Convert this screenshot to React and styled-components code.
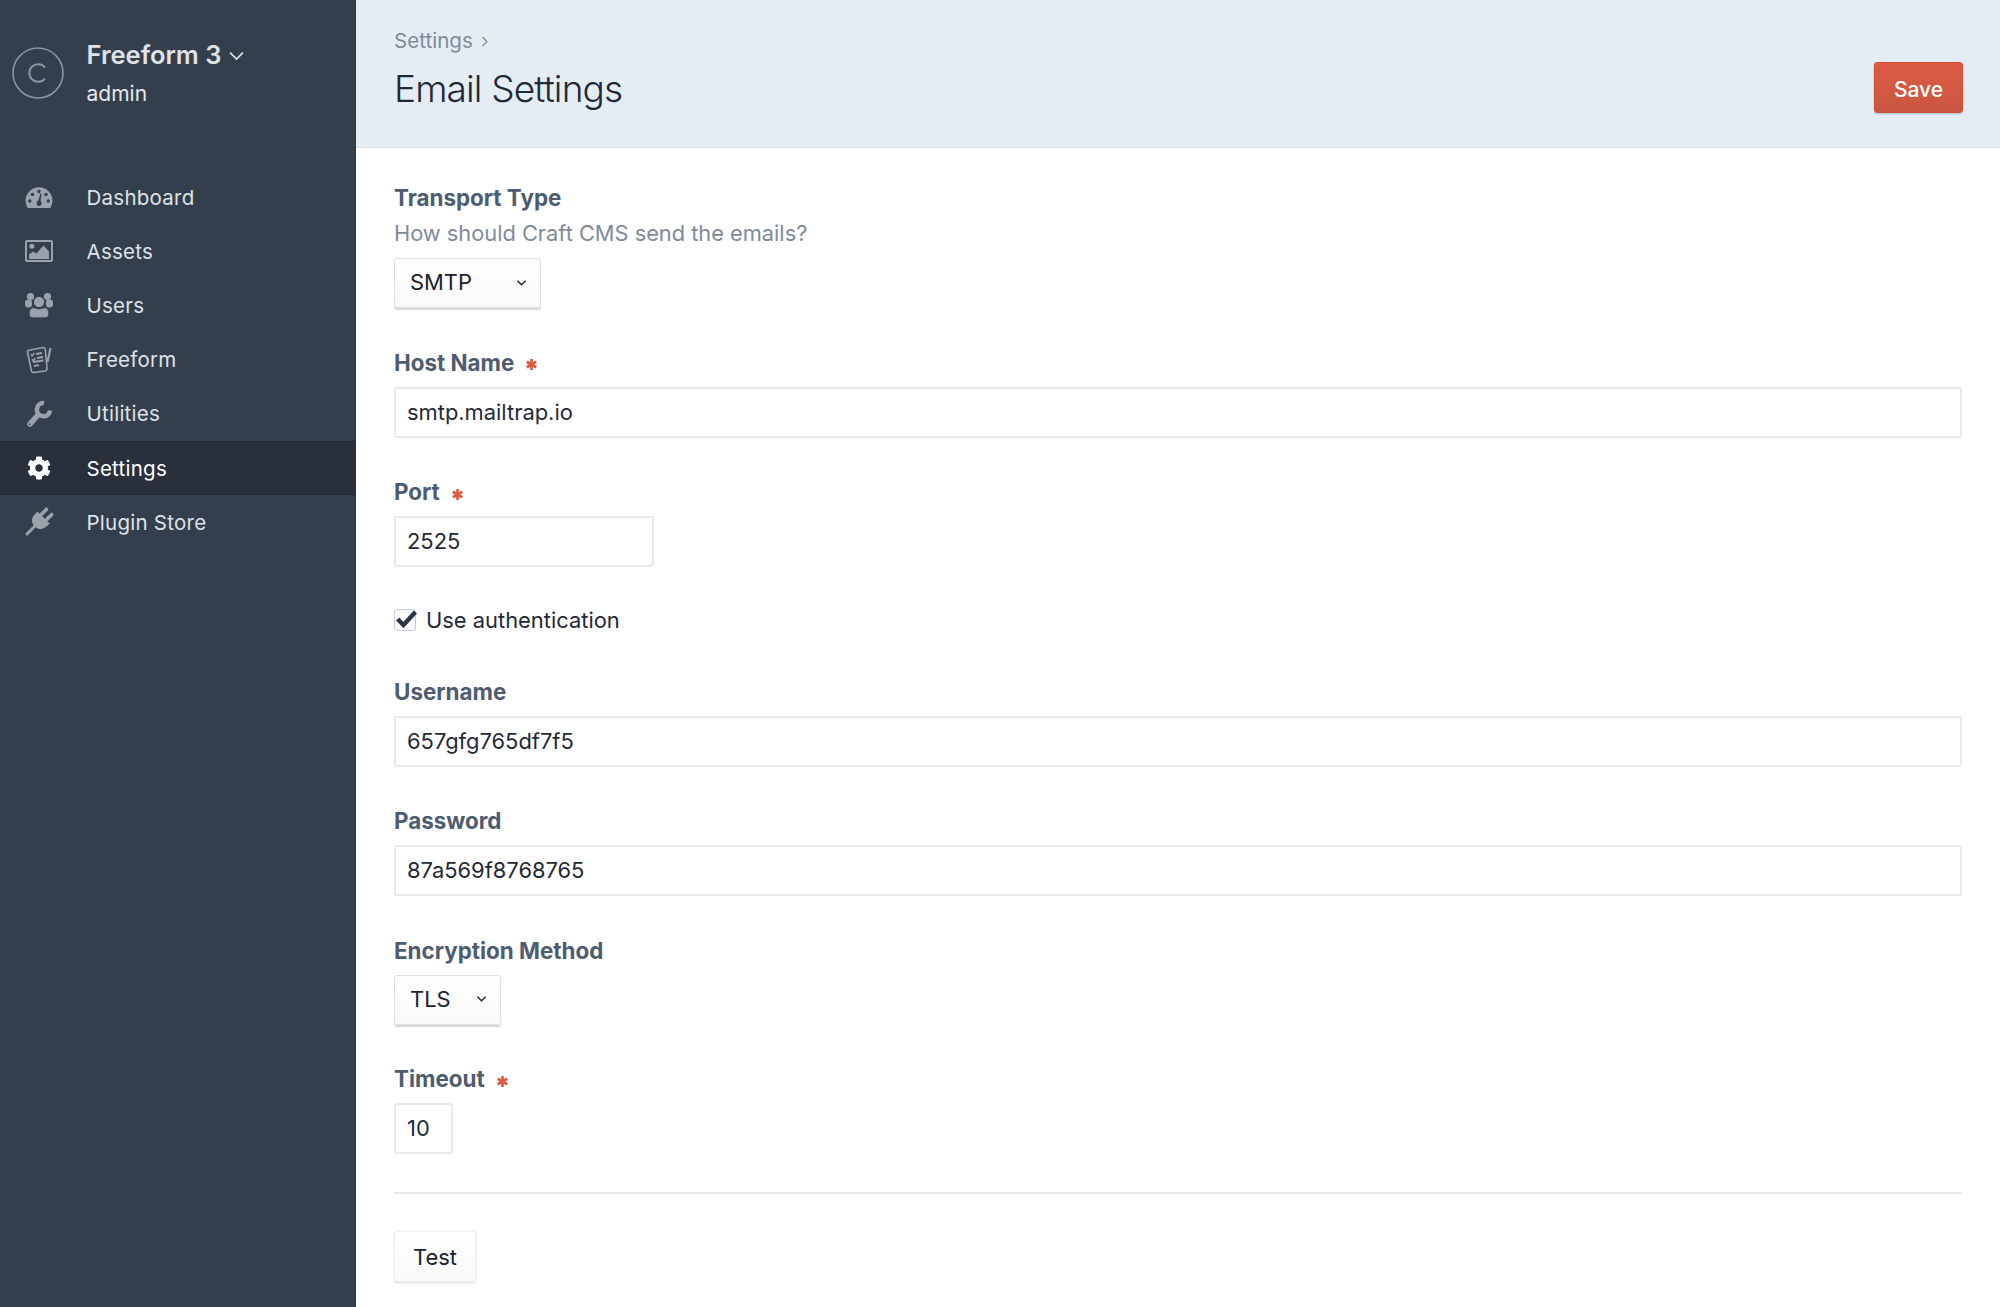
import React from "react";
import styled, { createGlobalStyle } from "styled-components";
import { FaCog } from "react-icons/fa";

const Global = createGlobalStyle`
  html, body { margin: 0; padding: 0; background: #fff; }
  body { font-family: Inter, "Liberation Sans", sans-serif; color: #1f2937; }
  * { box-sizing: border-box; }
`;

const Page = styled.div`
  display: flex;
  width: 2000px;
  height: 1307px;
  overflow: hidden;
`;

const Sidebar = styled.aside`
  width: 356px;
  flex: none;
  background: #343f4d;
  border-right: 1px solid #2b3440;
  color: #e2e5e9;
`;

const Brand = styled.div`
  display: flex;
  align-items: flex-start;
  padding: 37px 0 0 12px;
  height: 170px;
`;

const BrandLogo = styled.svg`
  width: 52px;
  height: 52px;
  flex: none;
  margin-top: 10px;
`;

const BrandText = styled.div`
  display: flex;
  flex-direction: column;
  margin-left: 22.5px;
`;

const BrandName = styled.div`
  display: flex;
  align-items: center;
  gap: 7px;
  font-size: 25.5px;
  line-height: 36px;
  font-weight: 600;
  color: #dfe2e6;
`;

const BrandUser = styled.div`
  font-size: 21px;
  line-height: 30px;
  margin-top: 5.5px;
  color: #e6e8eb;
`;

const Nav = styled.nav`
  display: flex;
  flex-direction: column;
`;

const NavRow = styled.div`
  display: flex;
  align-items: center;
  height: 54.2px;
  padding-left: 25px;
  font-size: 20.5px;
  letter-spacing: 0.25px;
  color: ${(p) => (p.$active ? "#ffffff" : "#dfe2e6")};
  background: ${(p) => (p.$active ? "#29303b" : "transparent")};
  box-shadow: ${(p) => (p.$active ? "inset 0 1px 0 #222831, inset 0 -1px 0 #222831" : "none")};
`;

const NavIcon = styled.span`
  width: 28px;
  height: 28px;
  margin-right: 33.5px;
  display: flex;
  align-items: center;
  justify-content: center;
  flex: none;
  color: ${(p) => (p.$active ? "#ffffff" : "#9aa2ac")};
`;

const Main = styled.main`
  flex: 1;
  min-width: 0;
  display: flex;
  flex-direction: column;
`;

const Header = styled.header`
  height: 148px;
  flex: none;
  background: #e5edf4;
  border-bottom: 1px solid #dcdfe3;
  display: flex;
  justify-content: space-between;
  padding: 26px 37px 0 38px;
`;

const Crumbs = styled.div`
  display: flex;
  align-items: center;
  gap: 8px;
  font-size: 20.6px;
  line-height: 30px;
  color: #7f8b99;
`;

const Title = styled.h1`
  margin: 8px 0 0;
  font-size: 37px;
  line-height: 50px;
  letter-spacing: -0.85px;
  font-weight: 300;
  color: #1f2937;
`;

const SaveButton = styled.button`
  width: 89px;
  height: 51px;
  margin-top: 36px;
  padding: 3px 0 0;
  border: 1px solid #d24f38;
  border-radius: 3px;
  background: linear-gradient(#dc5b45, #c95640);
  color: #fff;
  font: 500 21px Inter, sans-serif;
  box-shadow: 0 1px 2px rgba(80, 120, 150, 0.4);
`;

const Form = styled.div`
  padding: 35px 38px 0 38px;
  display: flex;
  flex-direction: column;
`;

const Field = styled.div`
  display: flex;
  flex-direction: column;
  align-items: flex-start;
  margin-bottom: ${(p) => (p.$last ? "38px" : "39.5px")};
`;

const Label = styled.label`
  display: flex;
  align-items: center;
  font-size: 22.4px;
  line-height: 30px;
  font-weight: 700;
  color: #4d5c70;
  margin-bottom: ${(p) => (p.$tight ? "5px" : "9px")};
`;

const Required = styled.span`
  margin-left: 12px;
  width: 11px;
  height: 11px;
  display: flex;
  margin-top: 4px;
`;

const Hint = styled.div`
  font-size: 21.8px;
  line-height: 30px;
  color: #7f8b99;
  margin-bottom: 10px;
`;

const Input = styled.div`
  width: ${(p) => p.$w || "100%"};
  height: 51px;
  display: flex;
  align-items: center;
  padding: 0 0 1px 11px;
  background: #fff;
  border: 2px solid #e8e9ec;
  border-radius: 3px;
  font-size: 21.9px;
  color: #1f2937;
`;

const Select = styled.div`
  width: ${(p) => p.$w};
  height: 50px;
  display: flex;
  align-items: center;
  justify-content: space-between;
  padding: 0 13px 2px 15px;
  background: linear-gradient(#fff, #f9f9f9);
  border: 1px solid #dedfe1;
  border-radius: 3px;
  box-shadow: 0 2px 1px #d8d9db;
  font-size: 21.9px;
  color: #1a2230;
`;

const CheckRow = styled.div`
  display: flex;
  align-items: center;
  height: 30px;
  margin: -2px 0 42px;
  font-size: 21.9px;
  color: #1f2937;
`;

const CheckBox = styled.span`
  position: relative;
  width: 22px;
  height: 22px;
  margin-right: 10px;
  background: #fbfbfb;
  border: 1px solid #c9cbce;
  border-radius: 3px;
  display: block;
`;

const CheckMark = styled.svg`
  position: absolute;
  left: 1px;
  top: 0;
  width: 21px;
  height: 18px;
`;

const Rule = styled.hr`
  margin: 0 0 37px;
  border: 0;
  border-top: 2px solid #e4e6ea;
  width: 100%;
`;

const TestButton = styled.button`
  align-self: flex-start;
  width: 82px;
  height: 51px;
  border: 1px solid #f0f0f0;
  border-radius: 2px;
  background: linear-gradient(#fff, #f9f9f9);
  box-shadow: 0 1px 2px #d8d9db;
  font: 400 21.9px Inter, sans-serif;
  color: #1a2230;
`;

const IconSvg = styled.svg`
  width: 28px;
  height: 28px;
  overflow: visible;
  flex: none;
`;

const Chevron = ({ size = 12, color = "#1f2937", width = 1.6 }) => (
  <svg width={size} height={size} viewBox="0 0 12 12" fill="none">
    <path d="M1.5 4 L6 8.5 L10.5 4" stroke={color} strokeWidth={width} />
  </svg>
);

const DashboardIcon = () => (
  <IconSvg viewBox="0 0 28 28" fill="currentColor">
    <path d="M2.6 25 Q0.5 21.5 0.5 17.8 A13.5 13.5 0 0 1 27.5 17.8 Q27.5 21.5 25.4 25 Z" />
    <g fill="#343f4d">
      <circle cx="4.8" cy="18" r="1.7" />
      <circle cx="7.5" cy="11.5" r="1.7" />
      <circle cx="14" cy="8.5" r="1.7" />
      <circle cx="21" cy="11.5" r="1.7" />
      <circle cx="23.3" cy="18" r="1.7" />
      <path d="M15.6 10.5 L16.6 11 L15.6 17.5 Q17.6 20 16 22.2 Q14 23.8 12 22 Q10.8 19.5 13.2 17.4 Z" />
    </g>
  </IconSvg>
);

const AssetsIcon = () => (
  <IconSvg viewBox="0 0 28 28" fill="currentColor">
    <rect x="1" y="4" width="26" height="20" rx="1" fill="none" stroke="currentColor" strokeWidth="2" />
    <circle cx="6.8" cy="9.2" r="2.5" />
    <path d="M4 22 V17.5 L8 14.5 L11.5 16.5 L18.5 8.5 L24 14.5 V22 Z" />
  </IconSvg>
);

const UsersIcon = () => (
  <IconSvg viewBox="0 0 28 28" fill="currentColor">
    <circle cx="5.5" cy="5.5" r="3.6" />
    <circle cx="22.5" cy="5.5" r="3.6" />
    <rect x="0" y="8.5" width="7" height="8" rx="3" />
    <rect x="21" y="8.5" width="7" height="8" rx="3" />
    <circle cx="14" cy="11" r="5.6" stroke="#343f4d" strokeWidth="1" />
    <path d="M4.2 23 Q4.2 17.6 8 16.6 Q14 19.4 20 16.6 Q23.8 17.6 23.8 23 Q23.8 26.8 20.5 26.8 H7.5 Q4.2 26.8 4.2 23 Z" stroke="#343f4d" strokeWidth="0.8" />
  </IconSvg>
);

const FormIcon = () => (
  <svg width="26" height="28" viewBox="0 0 26 28" fill="none" stroke="currentColor" strokeWidth="1.6">
    <path d="M2 4.5 L17 1.5 Q19 1.5 19.2 3 L21 22 Q21.2 24.5 19 25 L8 26.5 Q6 26.8 5.5 25 L1.5 6 Q1.3 5 2 4.5 Z" />
    <path d="M10 8 L16 7 M11 12 L17 11 M7 16 L17.5 14.5 M8 20 L13 19.2" strokeWidth="1.8" />
    <path d="M5 8 L6 10 L8.5 7 M6 13 L7 15 L9.5 12" strokeWidth="1.3" />
    <path d="M21.5 16 L24.5 2" strokeWidth="2.2" />
  </svg>
);

const WrenchIcon = () => (
  <IconSvg viewBox="0 0 28 28" fill="none" stroke="currentColor">
    <path d="M5 24 L13 15" strokeWidth="5.6" strokeLinecap="round" />
    <path d="M19 3 A6.6 6.6 0 1 0 25 10.5" strokeWidth="4.6" />
    <circle cx="4.6" cy="24.2" r="0.9" fill="#343f4d" stroke="none" />
  </IconSvg>
);

const PlugIcon = () => (
  <IconSvg viewBox="0 0 28 28" fill="currentColor">
    <g transform="rotate(45 14 14)">
      <rect x="8.5" y="-2" width="3.6" height="10" rx="1.6" />
      <rect x="15.9" y="-2" width="3.6" height="10" rx="1.6" />
      <path d="M5.5 7.5 H22.5 V11.5 Q22.5 19.5 14 20.5 Q5.5 19.5 5.5 11.5 Z" />
      <path d="M14 20 V31" stroke="currentColor" strokeWidth="3" strokeLinecap="round" />
    </g>
  </IconSvg>
);

const navItems = [
  ["Dashboard", <DashboardIcon />],
  ["Assets", <AssetsIcon />],
  ["Users", <UsersIcon />],
  ["Freeform", <FormIcon />],
  ["Utilities", <WrenchIcon />],
  ["Settings", <FaCog size={24} />, true],
  ["Plugin Store", <PlugIcon />],
];

const Star = () => (
  <Required>
    <svg width="11" height="11" viewBox="0 0 10 10" stroke="#dc5a41" strokeWidth="2.4">
      <path d="M5 0 V10 M0.7 2.5 L9.3 7.5 M0.7 7.5 L9.3 2.5" />
    </svg>
  </Required>
);

export default function App() {
  return (
    <Page>
      <Global />
      <Sidebar>
        <Brand>
          <BrandLogo viewBox="0 0 52 52" fill="none" stroke="#8b95a0" strokeWidth="1.6">
            <circle cx="26" cy="26" r="25" />
            <path d="M33 20.5 A8.8 8.8 0 1 0 33 31.5" strokeWidth="2" />
          </BrandLogo>
          <BrandText>
            <BrandName>
              Freeform 3 <Chevron size={17} color="#e2e5e9" width={1.2} />
            </BrandName>
            <BrandUser>admin</BrandUser>
          </BrandText>
        </Brand>
        <Nav>
          {navItems.map(([label, icon, active]) => (
            <NavRow key={label} $active={active}>
              <NavIcon $active={active}>{icon}</NavIcon>
              {label}
            </NavRow>
          ))}
        </Nav>
      </Sidebar>
      <Main>
        <Header>
          <div>
            <Crumbs>
              Settings
              <svg width="8" height="12" viewBox="0 0 8 12" fill="none" stroke="#7f8b99" strokeWidth="1.2">
                <path d="M1.5 2 L6 6.5 L1.5 11" />
              </svg>
            </Crumbs>
            <Title>Email Settings</Title>
          </div>
          <SaveButton>Save</SaveButton>
        </Header>
        <Form>
          <Field>
            <Label $tight>Transport Type</Label>
            <Hint>How should Craft CMS send the emails?</Hint>
            <Select $w="147px">SMTP <Chevron size={11} /></Select>
          </Field>
          <Field>
            <Label>Host Name <Star /></Label>
            <Input>smtp.mailtrap.io</Input>
          </Field>
          <Field>
            <Label>Port <Star /></Label>
            <Input $w="260px">2525</Input>
          </Field>
          <CheckRow>
            <CheckBox>
              <CheckMark viewBox="0 0 21 18" fill="none" stroke="#2b3646" strokeWidth="4.4">
                <path d="M1.5 9 L7.5 15 L19.5 2" />
              </CheckMark>
            </CheckBox>
            Use authentication
          </CheckRow>
          <Field>
            <Label>Username</Label>
            <Input>657gfg765df7f5</Input>
          </Field>
          <Field>
            <Label>Password</Label>
            <Input>87a569f8768765</Input>
          </Field>
          <Field>
            <Label>Encryption Method</Label>
            <Select $w="107px">TLS <Chevron size={11} /></Select>
          </Field>
          <Field $last>
            <Label>Timeout <Star /></Label>
            <Input $w="59px">10</Input>
          </Field>
          <Rule />
          <TestButton>Test</TestButton>
        </Form>
      </Main>
    </Page>
  );
}
